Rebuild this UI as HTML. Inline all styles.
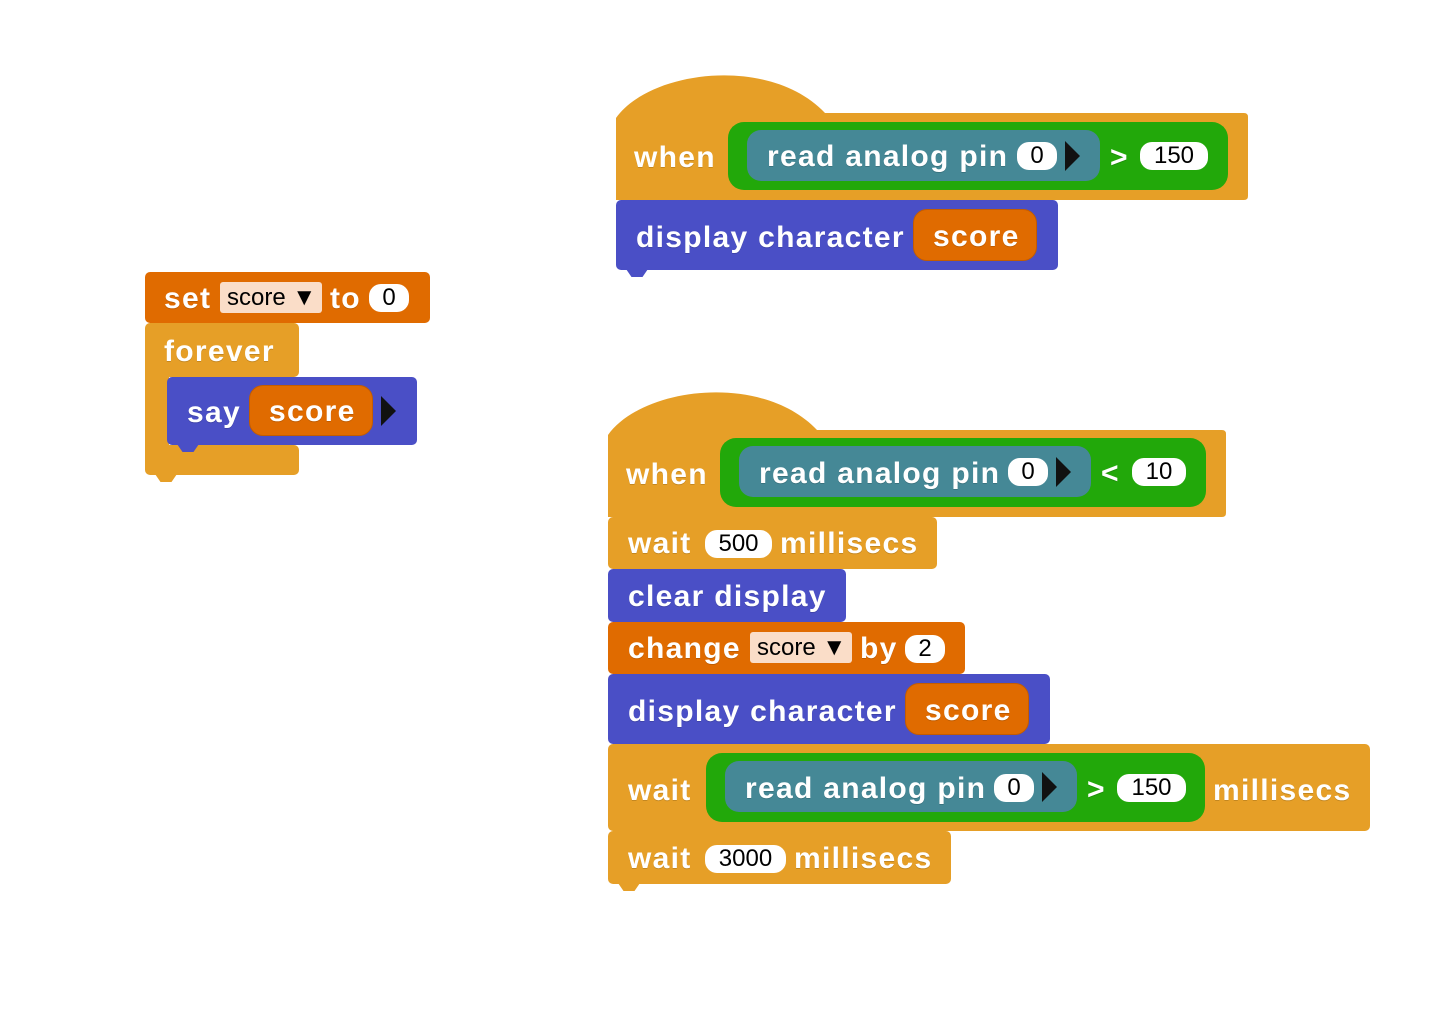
<!DOCTYPE html>
<html><head><meta charset="utf-8"><style>
body{margin:0;width:1442px;height:1022px;background:#fff;position:relative;overflow:hidden;font-family:"Liberation Sans",Arial,sans-serif}
.b{position:absolute;border-radius:5px}
.c{background:#E69F27}.v{background:#E06B00}.p{background:#4A4FC6}.g{background:#22A80A;border-radius:16px}.tl{background:#458896;border-radius:14px}
.r{position:absolute;background:#E06B00;border-radius:14px;border:1px solid #c35c00;box-sizing:border-box}
.t{position:absolute;color:#fff;font-weight:bold;font-size:30px;letter-spacing:1.3px;line-height:30px;white-space:nowrap;text-shadow:0 1px 0 rgba(0,0,0,.15)}
.w{position:absolute;background:#fff;border-radius:12px;color:#000;font-size:24px;line-height:28px;text-align:center}
.d{position:absolute;background:#FADDC8;border-radius:3px;color:#000;font-size:24px;line-height:31px;padding-left:7px;box-sizing:border-box;white-space:nowrap}
.tri{position:absolute;width:0;height:0;border-top:15px solid transparent;border-bottom:15px solid transparent;border-left:15px solid #111}
.tab{position:absolute;width:22px;height:8px;clip-path:polygon(0 0,100% 0,75% 100%,25% 100%)}
</style></head><body>
<svg width="1442" height="1022" style="position:absolute;left:0;top:0">
<path d="M616,200 L616,118 C650,70 770,55 825,113 L1244,113 Q1248,113 1248,117 L1248,196 Q1248,200 1244,200 Z" fill="#E69F27"/>
<path d="M608,517 L608,435 C642,387 762,372 817,430 L1222,430 Q1226,430 1226,434 L1226,513 Q1226,517 1222,517 Z" fill="#E69F27"/>
</svg>
<!-- script 1 -->
<div class="tab c" style="left:626px;top:199px"></div>
<div class="t" style="left:634px;top:143px">when</div>
<div class="b g" style="left:728px;top:122px;width:500px;height:68px"></div>
<div class="b tl" style="left:747px;top:130px;width:353px;height:51px"></div>
<div class="t" style="left:767px;top:142px">read analog pin</div>
<div class="w" style="left:1017px;top:142px;width:40px">0</div>
<div class="tri" style="left:1065px;top:141px"></div>
<div class="t" style="left:1110px;top:143px">&gt;</div>
<div class="w" style="left:1140px;top:142px;width:68px">150</div>
<div class="b p" style="left:616px;top:200px;width:442px;height:70px"></div>
<div class="tab p" style="left:626px;top:269px"></div>
<div class="t" style="left:636px;top:223px">display character</div>
<div class="r" style="left:913px;top:209px;width:124px;height:52px"></div>
<div class="t" style="left:933px;top:222px">score</div>
<!-- script left -->
<div class="b v" style="left:145px;top:272px;width:285px;height:51px"></div>
<div class="t" style="left:164px;top:284px">set</div>
<div class="d" style="left:220px;top:282px;width:102px">score ▼</div>
<div class="t" style="left:330px;top:284px">to</div>
<div class="w" style="left:369px;top:284px;width:40px">0</div>
<div class="b c" style="left:145px;top:323px;width:154px;height:54px"></div>
<div class="b c" style="left:145px;top:370px;width:24px;height:90px;border-radius:0"></div>
<div class="b c" style="left:145px;top:445px;width:154px;height:30px"></div>
<div class="tab c" style="left:155px;top:474px"></div>
<div class="t" style="left:164px;top:337px">forever</div>
<div class="b p" style="left:167px;top:377px;width:250px;height:68px"></div>
<div class="tab p" style="left:177px;top:444px"></div>
<div class="t" style="left:187px;top:398px">say</div>
<div class="r" style="left:249px;top:385px;width:124px;height:51px"></div>
<div class="t" style="left:269px;top:397px">score</div>
<div class="tri" style="left:381px;top:396px"></div>
<!-- script 2 -->
<div class="t" style="left:626px;top:460px">when</div>
<div class="b g" style="left:720px;top:438px;width:486px;height:69px"></div>
<div class="b tl" style="left:739px;top:446px;width:352px;height:51px"></div>
<div class="t" style="left:759px;top:459px">read analog pin</div>
<div class="w" style="left:1008px;top:458px;width:40px">0</div>
<div class="tri" style="left:1056px;top:457px"></div>
<div class="t" style="left:1101px;top:459px">&lt;</div>
<div class="w" style="left:1132px;top:458px;width:54px">10</div>

<div class="b c" style="left:608px;top:517px;width:329px;height:52px"></div>
<div class="tab c" style="left:618px;top:568px"></div>
<div class="t" style="left:628px;top:529px">wait</div>
<div class="w" style="left:705px;top:530px;width:67px">500</div>
<div class="t" style="left:780px;top:529px">millisecs</div>

<div class="b p" style="left:608px;top:569px;width:238px;height:53px"></div>
<div class="tab p" style="left:618px;top:621px"></div>
<div class="t" style="left:628px;top:582px">clear display</div>

<div class="b v" style="left:608px;top:622px;width:357px;height:52px"></div>
<div class="tab v" style="left:618px;top:673px"></div>
<div class="t" style="left:628px;top:634px">change</div>
<div class="d" style="left:750px;top:632px;width:102px">score ▼</div>
<div class="t" style="left:860px;top:634px">by</div>
<div class="w" style="left:905px;top:635px;width:40px">2</div>

<div class="b p" style="left:608px;top:674px;width:442px;height:70px"></div>
<div class="tab p" style="left:618px;top:743px"></div>
<div class="t" style="left:628px;top:697px">display character</div>
<div class="r" style="left:905px;top:683px;width:124px;height:52px"></div>
<div class="t" style="left:925px;top:696px">score</div>

<div class="b c" style="left:608px;top:744px;width:762px;height:87px"></div>
<div class="tab c" style="left:618px;top:830px"></div>
<div class="t" style="left:628px;top:776px">wait</div>
<div class="b g" style="left:706px;top:753px;width:499px;height:69px"></div>
<div class="b tl" style="left:725px;top:761px;width:352px;height:51px"></div>
<div class="t" style="left:745px;top:774px">read analog pin</div>
<div class="w" style="left:994px;top:774px;width:40px">0</div>
<div class="tri" style="left:1042px;top:772px"></div>
<div class="t" style="left:1087px;top:775px">&gt;</div>
<div class="w" style="left:1117px;top:774px;width:69px">150</div>
<div class="t" style="left:1213px;top:776px">millisecs</div>

<div class="b c" style="left:608px;top:831px;width:343px;height:53px"></div>
<div class="tab c" style="left:618px;top:883px"></div>
<div class="t" style="left:628px;top:844px">wait</div>
<div class="w" style="left:705px;top:845px;width:81px">3000</div>
<div class="t" style="left:794px;top:844px">millisecs</div>
</body></html>
